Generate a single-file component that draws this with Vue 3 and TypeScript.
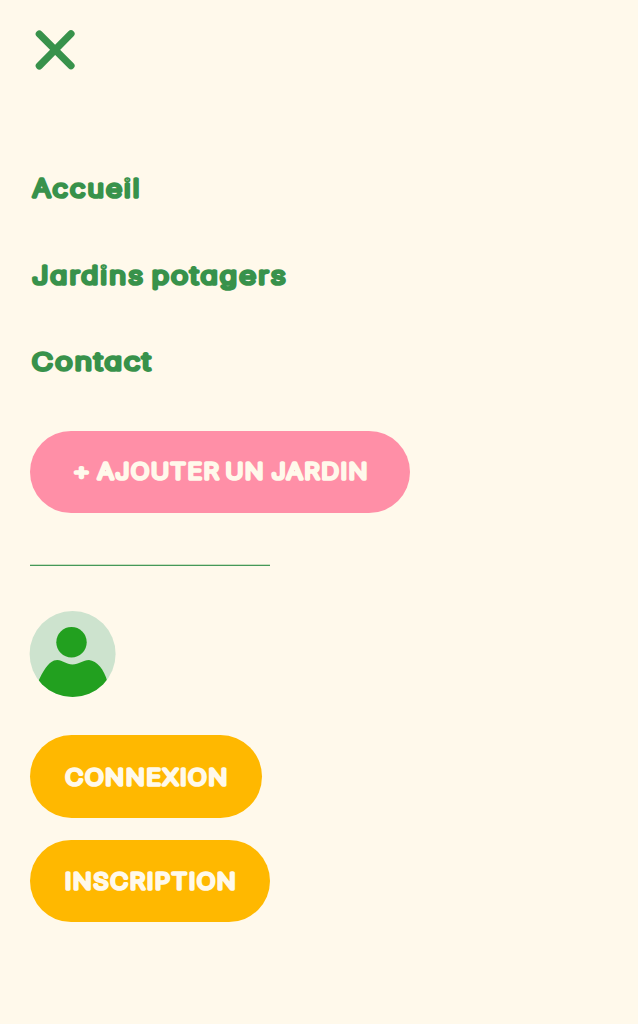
<script setup lang="ts">
interface Word { text: string; x: number; length: number }
interface Label { name: string; width: number; words: Word[] }

const links: Label[] = [
  { name: 'Accueil', width: 110, words: [{ text: 'Accueil', x: 2.7, length: 109 }] },
  { name: 'Jardins potagers', width: 257, words: [
    { text: 'Jardins', x: 2.2, length: 113 },
    { text: 'potagers', x: 121.9, length: 136 },
  ] },
  { name: 'Contact', width: 122, words: [{ text: 'Contact', x: 2, length: 121 }] },
]
const add: Word[] = [
  { text: '+', x: 43.2, length: 18.5 },
  { text: 'AJOUTER', x: 67.8, length: 123 },
  { text: 'UN', x: 195.7, length: 39.5 },
  { text: 'JARDIN', x: 241.7, length: 97.5 },
]
</script>

<template>
  <main class="menu">
    <button class="close" aria-label="Fermer">
      <svg width="40" height="40" viewBox="0 0 40 40"><path d="M4.3 4 36 35.7M36 3.8 4.3 35.9" /></svg>
    </button>
    <nav class="links">
      <a v-for="link in links" :key="link.name">
        <svg :width="link.width" height="40">
          <text v-for="word in link.words" :key="word.text" :x="word.x" y="28" :textLength="word.length" lengthAdjust="spacingAndGlyphs">{{ word.text }}</text>
        </svg>
      </a>
    </nav>
    <button class="pill add">
      <svg width="381" height="82">
        <text v-for="word in add" :key="word.text" :x="word.x" y="48.4" :textLength="word.length" lengthAdjust="spacingAndGlyphs">{{ word.text }}</text>
      </svg>
    </button>
    <div class="rule"></div>
    <svg class="avatar" width="86" height="86" viewBox="0 0 86 86">
      <defs><clipPath id="disc"><circle cx="42.6" cy="43" r="43" /></clipPath></defs>
      <g clip-path="url(#disc)">
        <rect x="-1" width="87" height="86" fill="#cde3ce" />
        <circle cx="41.5" cy="31.2" r="15.2" fill="#22a01f" />
        <path d="M8 71C13 60 18 52 24 49.6C31 47 35 53.5 42.5 53.5C49 53.5 53 49 59 49C67 50 74 58 77.5 71V86H8Z" fill="#22a01f" />
      </g>
    </svg>
    <button class="pill login">
      <svg width="232" height="83"><text x="35.6" y="50.3" textLength="163.5" lengthAdjust="spacingAndGlyphs">CONNEXION</text></svg>
    </button>
    <button class="pill signup">
      <svg width="240" height="82"><text x="35" y="49.3" textLength="172.5" lengthAdjust="spacingAndGlyphs">INSCRIPTION</text></svg>
    </button>
  </main>
</template>

<style>
body { background: #fff9eb; }
</style>

<style scoped>
.menu {
  box-sizing: border-box;
  height: 1024px;
  padding: 30px 30px 30px 29.7px;
  background: #fff9eb;
  display: flex;
  flex-direction: column;
  align-items: flex-start;
}
button { border: 0; padding: 0; background: none; }
svg { display: block; overflow: visible; }
.close { margin-left: 5.8px; height: 40px; }
.close path { fill: none; stroke: #38924b; stroke-width: 7.2; stroke-linecap: round; }
.links { display: flex; flex-direction: column; gap: 46.5px; margin-top: 99px; }
.links a { display: block; height: 40px; }
text {
  font-family: Inter, "DejaVu Sans", sans-serif;
  font-size: 23.5px;
  font-weight: 200;
  letter-spacing: 2.2px;
  font-feature-settings: "cv11" 1;
  fill: #38924b;
  stroke: #38924b;
  stroke-width: 3.7px;
  stroke-linejoin: round;
  stroke-linecap: round;
}
.pill { border-radius: 42px; flex: none; }
.pill text { fill: #fff9eb; stroke: #fff9eb; font-size: 22px; letter-spacing: 1.8px; }
.add { width: 380.5px; height: 82px; margin-top: 49px; background: #ff8fa7; }
.rule { width: 240px; height: 1px; margin-top: 52px; background: #459859; box-shadow: 0 -1px #c9dfbd; }
.avatar { margin-top: 45px; flex: none; }
.login { width: 232px; height: 83px; margin-top: 38.4px; background: #ffb800; }
.signup { width: 240px; height: 82px; margin-top: 22px; background: #ffb800; }
</style>
